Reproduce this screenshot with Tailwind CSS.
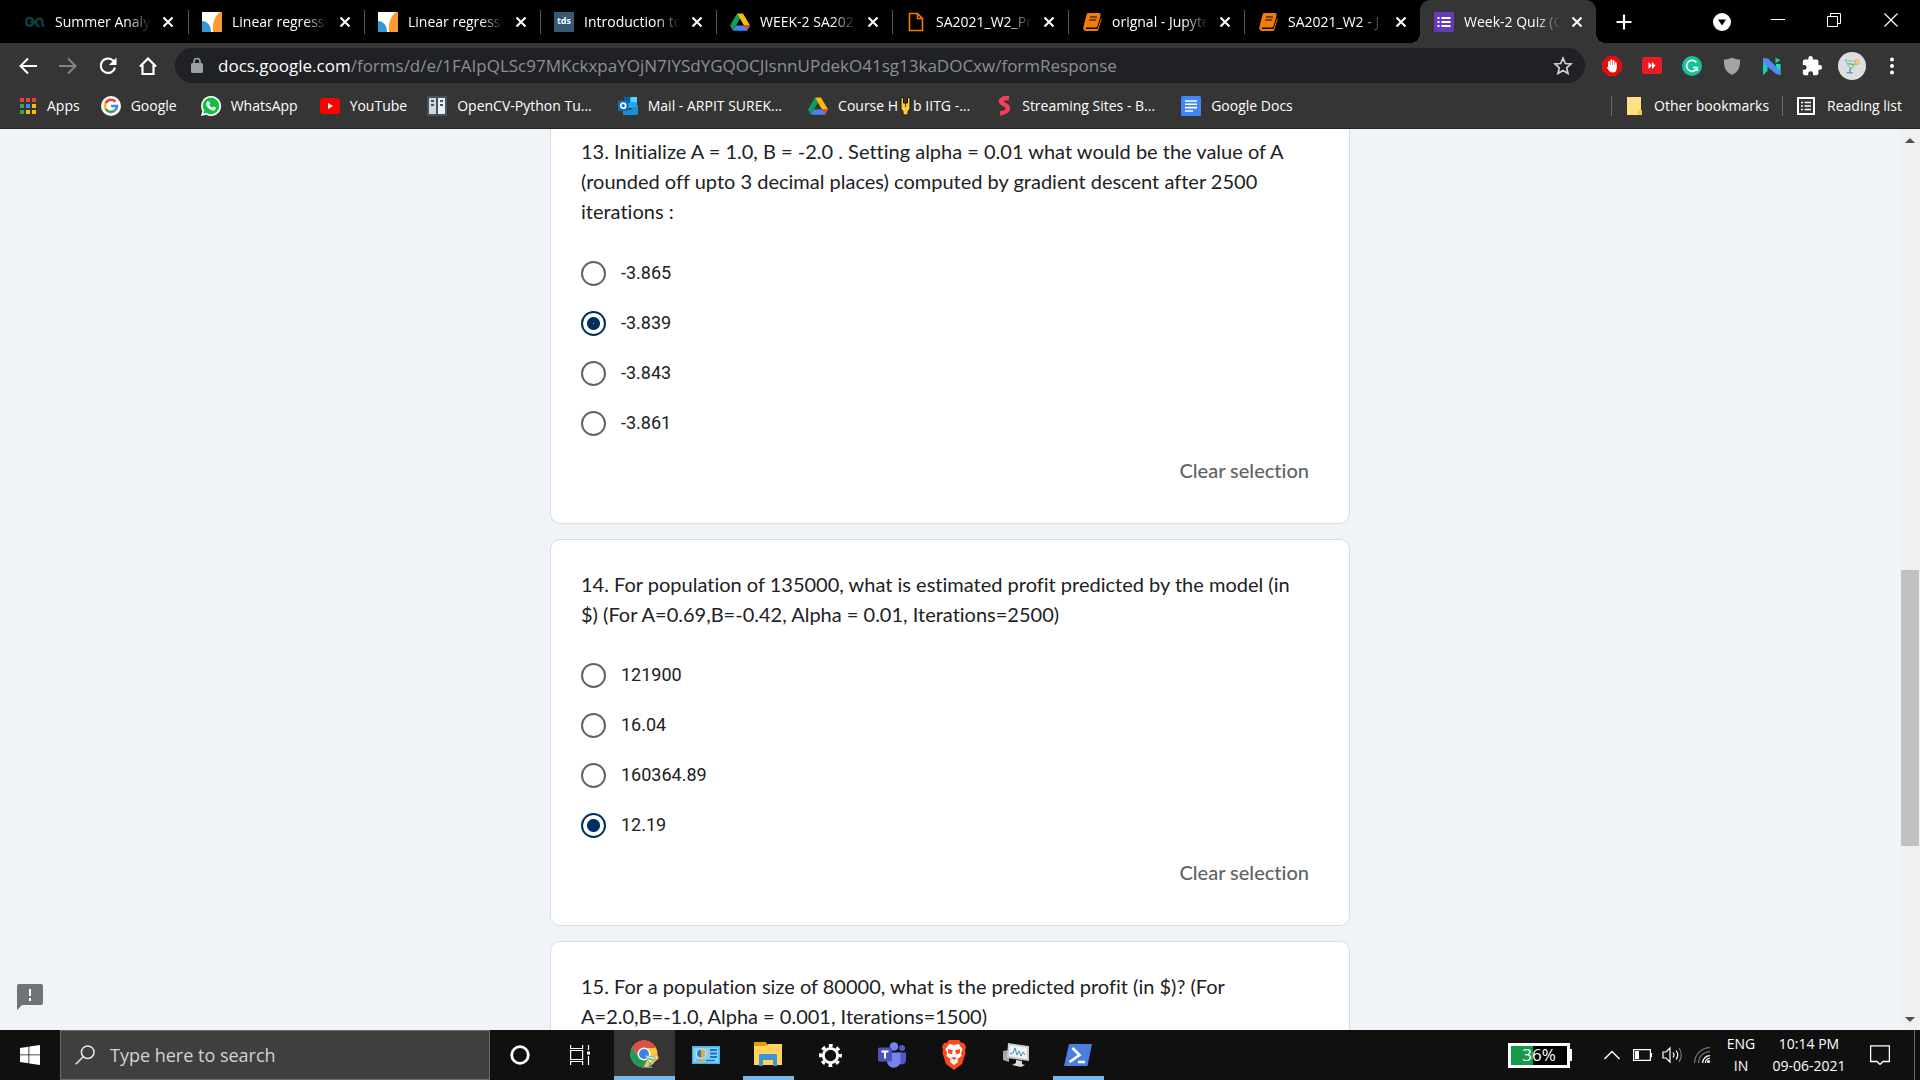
<!DOCTYPE html>
<html lang="en">
<head>
<meta charset="utf-8">
<meta name="viewport" content="width=device-width, initial-scale=1">
<title>Week-2 Quiz</title>
<script src="https://cdn.jsdelivr.net/npm/@tailwindcss/browser@4"></script>
</head>
<body class="flex h-screen flex-col overflow-hidden bg-[#f0f4f8] font-['Open_Sans',sans-serif] text-sm text-white">

<svg class="hidden" aria-hidden="true">
  <symbol id="x" viewBox="0 0 12 12"><path d="M1.5 1.5l9 9M10.5 1.5l-9 9" stroke="#fff" stroke-width="2.1" fill="none"/></symbol>
  <symbol id="matlab" viewBox="0 0 20 20"><path fill="#fff" d="M0 0h20v20H0z"/><path fill="#f93" d="M20 0v20h-9C10 11 13 3 18 0z"/><path fill="#39c" d="M0 9c5 0 9 4 9 11H0z"/></symbol>
  <symbol id="drive" viewBox="0 0 20 18"><path fill="#0f9d58" d="M7 0.500L0 12.500l3 5.200L10 5.600z"/><path fill="#fbbc04" d="M7 0.500h6l7 12h-6z"/><path fill="#4285f4" d="M6 12.500h14l-3 5.200H3z"/><path fill="#ea4335" d="M14 12.500h6l-3 5.200z"/></symbol>
  <symbol id="book" viewBox="0 0 20 20"><path fill="#f57c00" d="M6 1h11c1 0 2 1 1.700 2L15.500 14c-.3 1-1 1.500-2 1.500H4.500c-1 0-1 1.500 0 1.500H14c1 0 1.700-.4 2-1.300L19 6c.6 1 .5 1.500.3 2L16.500 17.500c-.4 1-1.200 1.500-2.200 1.500H4c-2 0-3.300-2-2.600-4L4.500 3C4.800 1.700 5.200 1 6 1z"/><path stroke="#000" stroke-width="1.200" d="M8 5h7M7.200 8h7"/></symbol>
  <symbol id="glass" viewBox="0 0 24 24"><circle cx="18" cy="7" r="4" fill="#f9b24a"/><circle cx="18" cy="7" r="2" fill="#fde3b0"/><path fill="#dff0f7" stroke="#5d9fc4" stroke-width="1" d="M3 4l15 3-6 8-4-2z"/><path fill="#8bc34a" d="M5 7l11 2-2 3-7-2z"/><path d="M10 14l-1 7M5 21h8" stroke="#5d9fc4" stroke-width="2" fill="none"/></symbol>
</svg>

<header class="shrink-0">
  <!-- Tab strip -->
  <div class="flex h-[43px] items-center bg-black pl-3">
    <div class="flex h-full w-44 shrink-0 items-center pl-[13px]">
      <svg class="size-5 shrink-0" viewBox="0 0 20 20"><path d="M8 10H5.500M8 10c0 5-7 5-7 0s5-5 7-2l6 7M11 12c-1-5 4-7 6-4l1 7" stroke="#0c3f43" stroke-width="2.500" fill="none"/></svg>
      <span class="ml-[10px] mr-[11px] w-24 overflow-hidden whitespace-nowrap [mask-image:linear-gradient(to_right,#000_75%,transparent)]">Summer Analytics</span>
      <button aria-label="Close tab"><svg class="size-3"><use href="#x"/></svg></button>
    </div>
    <div class="flex h-6 w-44 shrink-0 items-center border-l border-[#555] pl-[13px]">
      <svg class="size-5 shrink-0"><use href="#matlab"/></svg>
      <span class="ml-[10px] mr-[11px] w-24 overflow-hidden whitespace-nowrap [mask-image:linear-gradient(to_right,#000_75%,transparent)]">Linear regression</span>
      <button aria-label="Close tab"><svg class="size-3"><use href="#x"/></svg></button>
    </div>
    <div class="flex h-6 w-44 shrink-0 items-center border-l border-[#555] pl-[13px]">
      <svg class="size-5 shrink-0"><use href="#matlab"/></svg>
      <span class="ml-[10px] mr-[11px] w-24 overflow-hidden whitespace-nowrap [mask-image:linear-gradient(to_right,#000_75%,transparent)]">Linear regression</span>
      <button aria-label="Close tab"><svg class="size-3"><use href="#x"/></svg></button>
    </div>
    <div class="flex h-6 w-44 shrink-0 items-center border-l border-[#555] pl-[13px]">
      <span class="flex size-5 shrink-0 items-center justify-center bg-[#355876] text-[9px] font-bold">tds</span>
      <span class="ml-[10px] mr-[11px] w-24 overflow-hidden whitespace-nowrap [mask-image:linear-gradient(to_right,#000_75%,transparent)]">Introduction to</span>
      <button aria-label="Close tab"><svg class="size-3"><use href="#x"/></svg></button>
    </div>
    <div class="flex h-6 w-44 shrink-0 items-center border-l border-[#555] pl-[13px]">
      <svg class="size-5 shrink-0"><use href="#drive"/></svg>
      <span class="ml-[10px] mr-[11px] w-24 overflow-hidden whitespace-nowrap [mask-image:linear-gradient(to_right,#000_75%,transparent)]">WEEK-2 SA2021</span>
      <button aria-label="Close tab"><svg class="size-3"><use href="#x"/></svg></button>
    </div>
    <div class="flex h-6 w-44 shrink-0 items-center border-l border-[#555] pl-[13px]">
      <svg class="size-5 shrink-0" viewBox="0 0 20 20" fill="none" stroke="#f57c00" stroke-width="1.600"><path d="M3.500 1.500h8l5 5v12h-13zM11.500 1.500v5h5"/></svg>
      <span class="ml-[10px] mr-[11px] w-24 overflow-hidden whitespace-nowrap [mask-image:linear-gradient(to_right,#000_75%,transparent)]">SA2021_W2_Pr</span>
      <button aria-label="Close tab"><svg class="size-3"><use href="#x"/></svg></button>
    </div>
    <div class="flex h-6 w-44 shrink-0 items-center border-l border-[#555] pl-[13px]">
      <svg class="size-5 shrink-0"><use href="#book"/></svg>
      <span class="ml-[10px] mr-[11px] w-24 overflow-hidden whitespace-nowrap [mask-image:linear-gradient(to_right,#000_75%,transparent)]">orignal - Jupyter</span>
      <button aria-label="Close tab"><svg class="size-3"><use href="#x"/></svg></button>
    </div>
    <div class="flex h-6 w-44 shrink-0 items-center border-l border-[#555] pl-[13px]">
      <svg class="size-5 shrink-0"><use href="#book"/></svg>
      <span class="ml-[10px] mr-[11px] w-24 overflow-hidden whitespace-nowrap [mask-image:linear-gradient(to_right,#000_75%,transparent)]">SA2021_W2 - J</span>
      <button aria-label="Close tab"><svg class="size-3"><use href="#x"/></svg></button>
    </div>
    <div class="relative flex h-full w-44 shrink-0 items-center rounded-t-[10px] bg-[#353535] pl-[14px]">
      <span class="absolute bottom-0 -left-[10px] size-[10px] bg-[radial-gradient(circle_at_0_0,#000_10px,#353535_10px)]"></span>
      <span class="absolute bottom-0 -right-[10px] size-[10px] bg-[radial-gradient(circle_at_100%_0,#000_10px,#353535_10px)]"></span>
      <svg class="size-5 shrink-0" viewBox="0 0 20 20"><rect width="20" height="20" rx="1" fill="#673ab7"/><path stroke="#fff" stroke-width="2" d="M3.500 6h2M7.500 6h9M3.500 10h2M7.500 10h9M3.500 14h2M7.500 14h9"/></svg>
      <span class="ml-[10px] mr-[11px] w-24 overflow-hidden whitespace-nowrap [mask-image:linear-gradient(to_right,#000_75%,transparent)]">Week-2 Quiz (G</span>
      <button aria-label="Close tab"><svg class="size-3"><use href="#x"/></svg></button>
    </div>
    <button class="ml-5" aria-label="New tab"><svg class="size-4" viewBox="0 0 16 16"><path d="M8 0.500v15M0.500 8h15" stroke="#fff" stroke-width="2.200"/></svg></button>
    <div class="ml-auto flex items-center pr-[22px]">
      <button class="mr-10" aria-label="Search tabs"><svg class="size-[18px]" viewBox="0 0 18 18"><circle cx="9" cy="9" r="9" fill="#fff"/><path d="M5 6.500h8L9 12.500z" fill="#000"/></svg></button>
      <button class="mr-[42px]" aria-label="Minimize"><svg class="h-3 w-[14px]" viewBox="0 0 14 12"><path d="M0 3.500h14" stroke="#fff"/></svg></button>
      <button class="mr-[43px] mb-1" aria-label="Restore"><svg class="size-[14px]" viewBox="0 0 14 14" fill="none" stroke="#fff"><path d="M.5 3.500h10v10H.5zM3.500 3.500v-3h10v10h-3"/></svg></button>
      <button class="mb-1" aria-label="Close"><svg class="size-[14px]" viewBox="0 0 14 14"><path d="M.5.5l13 13M13.500.5l-13 13" stroke="#fff" stroke-width="1.200"/></svg></button>
    </div>
  </div>

  <!-- Address bar -->
  <div class="flex h-[45px] items-center bg-[#353535] px-2">
    <button class="flex w-10 justify-center" aria-label="Back"><svg class="size-5" viewBox="0 0 20 20" fill="none" stroke="#fff" stroke-width="2"><path d="M19 10H3M10 2.500L2.500 10l7.500 7.500"/></svg></button>
    <button class="flex w-10 justify-center" aria-label="Forward"><svg class="size-5" viewBox="0 0 20 20" fill="none" stroke="#858585" stroke-width="2"><path d="M1 10h16M10 2.500l7.500 7.500-7.500 7.500"/></svg></button>
    <button class="flex w-10 justify-center" aria-label="Reload"><svg class="size-5" viewBox="0 0 20 20"><path d="M17 11.500a7.200 7.200 0 1 1-2-7l1.500 1.500" fill="none" stroke="#fff" stroke-width="2.200"/><path fill="#fff" d="M18.500 1.500v7.500H11z"/></svg></button>
    <button class="flex w-10 justify-center" aria-label="Home"><svg class="size-5" viewBox="0 0 20 20" fill="none" stroke="#fff" stroke-width="2.200"><path d="M2 10.500L10 2.500l8 8M4.500 9v9h11V9"/></svg></button>
    <div class="mx-[7px] flex h-[35px] min-w-0 flex-1 items-center rounded-full bg-[#202124] pl-4 pr-3">
      <svg class="h-[18px] w-3 shrink-0" viewBox="0 0 12 18"><rect y="6" width="12" height="10" rx="1.500" fill="#9aa0a6"/><path d="M3 7V4.500a3 3 0 0 1 6 0V7" fill="none" stroke="#9aa0a6" stroke-width="1.600"/></svg>
      <span class="ml-[15px] flex-1 overflow-hidden whitespace-nowrap text-[17px] leading-6 text-[#8d9094]"><span class="text-white">docs.google.com</span>/forms/d/e/1FAIpQLSc97MKckxpaYOjN7IYSdYGQOCJlsnnUPdekO41sg13kaDOCxw/formResponse</span>
      <button aria-label="Bookmark this page"><svg class="size-5" viewBox="0 0 20 20" fill="none" stroke="#d0d0d0" stroke-width="1.700"><path d="M10 2.200l2.300 5.300 5.700.5-4.300 3.800 1.300 5.700-5-3-5 3 1.300-5.700L2 8l5.700-.5z"/></svg></button>
    </div>
    <button class="flex w-10 justify-center" aria-label="Ad blocker"><svg class="size-5" viewBox="0 0 20 20"><path fill="#e40d0d" d="M6 0h8l6 6v8l-6 6H6l-6-6V6z"/><path d="M7 10.500V6M9.300 10V4.200M11.600 10V4.800M13.800 11V7" stroke="#fff" stroke-width="1.800" stroke-linecap="round"/><path fill="#fff" d="M6.100 9h8.600v3c0 3-1.400 4.500-4 4.500-2.700 0-3.500-1.500-6-5 1-1 1.500-.5 2 .5z"/></svg></button>
    <button class="flex w-10 justify-center" aria-label="Video speed"><svg class="h-[17px] w-5" viewBox="0 0 20 17"><rect width="20" height="17" rx="2" fill="#ec1c24"/><path fill="#fff" d="M6.500 5l3.500 3.500-3.500 3.500zM10 5l3.500 3.500L10 12z"/></svg></button>
    <button class="flex w-10 justify-center" aria-label="Grammarly"><svg class="size-5" viewBox="0 0 20 20"><circle cx="10" cy="10" r="10" fill="#15c39a"/><path d="M14.500 6.500a5.500 5.500 0 1 0 .8 5H11M15.300 11v4" fill="none" stroke="#fff" stroke-width="1.700"/></svg></button>
    <button class="flex w-10 justify-center" aria-label="Shield"><svg class="size-[18px]" viewBox="0 0 18 18"><path fill="#a3a3a3" d="M9 0.500c2.500 1.500 5 2 8 2 .5 8-2 12.500-8 15.500C3 15 .5 10.500 1 2.500c3 0 5.500-.5 8-2z"/></svg></button>
    <button class="flex w-10 justify-center" aria-label="Reader"><svg class="size-5" viewBox="0 0 20 20"><path fill="#2bd9a8" d="M14 8h4.500v11L14 15zM1 8h4v7l-4 4z"/><path fill="#20c9c0" d="M1 7h4.500v8L1 19z"/><path fill="#4a8df5" d="M1 2l5 .5L18.500 15v4L14 18 1 7z"/><path fill="#25d67e" d="M13.500 1.500l5 2.700-5 3z"/></svg></button>
    <button class="flex w-10 justify-center" aria-label="Extensions"><svg class="size-[22px]" viewBox="0 0 24 24"><path fill="#fff" d="M20.500 11H19V7a2 2 0 0 0-2-2h-4V3.500a2.500 2.500 0 0 0-5 0V5H4a2 2 0 0 0-2 2v3.800h1.500a2.700 2.700 0 0 1 0 5.400H2V20a2 2 0 0 0 2 2h3.800v-1.500a2.700 2.700 0 0 1 5.400 0V22H17a2 2 0 0 0 2-2v-4h1.500a2.500 2.500 0 0 0 0-5z"/></svg></button>
    <button class="flex w-10 justify-center" aria-label="Profile"><span class="flex size-7 items-center justify-center rounded-full bg-[#dedede]"><svg class="size-[18px]"><use href="#glass"/></svg></span></button>
    <button class="flex w-10 justify-center" aria-label="Menu"><svg class="h-[18px] w-1" viewBox="0 0 4 18" fill="#fff"><circle cx="2" cy="2.500" r="2"/><circle cx="2" cy="9" r="2"/><circle cx="2" cy="15.500" r="2"/></svg></button>
  </div>

  <!-- Bookmarks -->
  <nav class="flex h-[41px] items-center whitespace-nowrap border-b border-[#232323] bg-[#353535] pb-1 pl-[19px] pr-[18px]">
    <a href="#" class="mr-[19px] flex items-center gap-[10px]"><svg class="size-[18px]" viewBox="0 0 18 18"><path fill="#ea4335" d="M1 1h4v4H1zM7 1h4v4H7zM13 1h4v4h-4z"/><path fill="#34a853" d="M1 7h4v4H1zM1 13h4v4H1z"/><path fill="#4285f4" d="M7 7h4v4H7z"/><path fill="#fbbc04" d="M13 7h4v4h-4zM7 13h4v4H7zM13 13h4v4h-4z"/></svg>Apps</a>
    <a href="#" class="ml-[2px] mr-6 flex items-center gap-[10px]"><svg class="size-5" viewBox="0 0 20 20"><circle cx="10" cy="10" r="10" fill="#fff"/><g fill="none" stroke-width="2.600"><path stroke="#ea4335" d="M14.500 5.700A6 6 0 0 0 4.700 7.200"/><path stroke="#fbbc04" d="M4.700 7.200a6 6 0 0 0 0 5.600"/><path stroke="#34a853" d="M4.700 12.800a6 6 0 0 0 9 1.800"/><path stroke="#4285f4" d="M13.700 14.600A6 6 0 0 0 16 10h-6"/></g></svg>Google</a>
    <a href="#" class="mr-[22px] flex items-center gap-[10px]"><svg class="size-5" viewBox="0 0 20 20"><path fill="#fff" d="M10 0a10 10 0 1 1-4.800 18.700L0 20l1.400-5A10 10 0 0 1 10 0z"/><path fill="#12c143" d="M10 1.600a8.300 8.300 0 1 1-4.500 15.300l-3.200.9.900-3.200A8.300 8.300 0 0 1 10 1.600z"/><path fill="#fff" d="M6.800 5.200l1.400.2.900 2.200-.9 1.200c.7 1.400 1.700 2.300 3.200 3l1.200-1.200 2.200 1c.2 1.500-.8 2.900-2.600 2.900-3.500-.4-6.500-3.400-7-6.500-.1-1.200.6-2.300 1.600-2.800z"/></svg>WhatsApp</a>
    <a href="#" class="mr-5 flex items-center gap-[10px]"><svg class="h-[16px] w-5" viewBox="0 0 20 16"><rect width="20" height="16" rx="3.500" fill="#f00"/><path fill="#fff" d="M8 5l5 3-5 3z"/></svg>YouTube</a>
    <a href="#" class="mr-[26px] flex items-center gap-[10px]"><svg class="size-5" viewBox="0 0 20 20"><path fill="#45545c" d="M0 0h20v20H0z"/><path fill="#cfd8dc" d="M2 2h7v16H2z"/><path fill="#eceff1" d="M11 2h7v16h-7z"/><path fill="#45545c" d="M4 4h3v2H4zM4 8h3v2H4zM13 4h3v2h-3zM13 8h3v2h-3z"/></svg>OpenCV-Python Tu...</a>
    <a href="#" class="mr-[26px] flex items-center gap-[10px]"><svg class="size-5" viewBox="0 0 20 20"><path fill="#28a8ea" d="M6 1h13v11H6z"/><path fill="#0a5ea8" d="M6 1h6v6H6z"/><path fill="#50d9ff" d="M13 1h6v5h-6z"/><path fill="#1490df" d="M5 19h13l2-1V9l-8 5-7-4z"/><rect y="4.500" width="10.500" height="10.500" rx="1" fill="#0f6cbd"/><circle cx="5.200" cy="9.700" r="2.500" fill="none" stroke="#fff" stroke-width="1.700"/></svg>Mail - ARPIT SUREK...</a>
    <a href="#" class="mr-[26px] flex items-center gap-[10px]"><svg class="size-5"><use href="#drive"/></svg><span class="flex items-center">Course H<svg class="mx-[2px] h-5 w-[11px]" viewBox="0 0 11 20"><path fill="#ffc83d" stroke="#111" d="M1 1.500h2.500V7h4V1.500H10V13l-2 2.500V19H3v-3.500L1 13z"/><path stroke="#111" stroke-width=".7" d="M5.500 7v4"/></svg>b IITG -...</span></a>
    <a href="#" class="mr-[26px] flex items-center gap-[10px]"><svg class="h-5 w-4" viewBox="0 0 16 20"><path d="M13 2C9 1.500 5 3 5 5.500s7 3.500 7 6.500-4 5-8 5.500" stroke="#f2405d" stroke-width="4.500" fill="none"/></svg>Streaming Sites - B...</a>
    <a href="#" class="flex items-center gap-[10px]"><svg class="size-5" viewBox="0 0 20 20"><rect width="20" height="20" rx="1.500" fill="#4285f4"/><path stroke="#fff" stroke-width="1.600" d="M4 5h12M4 8.300h12M4 11.600h12M4 15h8"/></svg>Google Docs</a>
    <a href="#" class="ml-auto flex h-5 items-center gap-3 border-l border-[#6b6b6b] pl-[15px]"><svg class="h-[18px] w-[15px]" viewBox="0 0 15 18"><path fill="#ffe083" d="M0 0h14v13h1v5H0z"/><path fill="#f3c64e" d="M11 18v-4l1-1h3v5z"/></svg>Other bookmarks</a>
    <a href="#" class="ml-[13px] flex h-5 items-center gap-3 border-l border-[#6b6b6b] pl-[14px]"><svg class="size-[18px]" viewBox="0 0 18 18" fill="none" stroke="#fff"><rect x="1" y="1" width="16" height="16" stroke-width="2"/><path stroke-width="1.600" d="M4 5.500h2M7.500 5.500H14M4 9h2M7.500 9H14M4 12.500h2M7.500 12.500H14"/></svg>Reading list</a>
  </nav>
</header>

<!-- Form page -->
<div class="relative flex min-h-0 flex-1">
  <main class="flex min-w-0 flex-1 flex-col items-center gap-[15px] overflow-hidden text-[#202124]">
    <form class="w-full max-w-[800px] shrink-0 rounded-b-[10px] border border-t-0 border-[#dadce0] bg-white px-[30px] pb-8 pt-[7px]">
      <h2 class="mb-[22px] font-['Lato',sans-serif] text-xl leading-[30px] [font-variant-ligatures:none]">13. Initialize A = 1.0, B = -2.0 . Setting alpha = 0.01 what would be the value of A<br>(rounded off upto 3 decimal places) computed by gradient descent after 2500<br>iterations :</h2>
      <div class="font-['Roboto',sans-serif] text-lg">
        <label class="flex h-[50px] items-center gap-[15px]"><input type="radio" name="q13" class="size-[25px] appearance-none rounded-full border-2 border-[#5f6368] checked:border-[#002f62] checked:bg-[radial-gradient(circle,#002f62_6px,transparent_7px)]">-3.865</label>
        <label class="flex h-[50px] items-center gap-[15px]"><input type="radio" name="q13" checked class="size-[25px] appearance-none rounded-full border-2 border-[#5f6368] checked:border-[#002f62] checked:bg-[radial-gradient(circle,#8fa6be_0px,#002f62_1px,#002f62_6px,transparent_7px)]">-3.839</label>
        <label class="flex h-[50px] items-center gap-[15px]"><input type="radio" name="q13" class="size-[25px] appearance-none rounded-full border-2 border-[#5f6368] checked:border-[#002f62] checked:bg-[radial-gradient(circle,#002f62_6px,transparent_7px)]">-3.843</label>
        <label class="flex h-[50px] items-center gap-[15px]"><input type="radio" name="q13" class="size-[25px] appearance-none rounded-full border-2 border-[#5f6368] checked:border-[#002f62] checked:bg-[radial-gradient(circle,#002f62_6px,transparent_7px)]">-3.861</label>
      </div>
      <div class="flex h-[43px] items-center justify-end pr-[10px]"><button type="reset" class="font-['Lato',sans-serif] text-xl font-medium text-[#5f6368] [font-variant-ligatures:none]">Clear selection</button></div>
    </form>

    <form class="w-full max-w-[800px] shrink-0 rounded-[10px] border border-[#dadce0] bg-white px-[30px] pb-8 pt-[29px]">
      <h2 class="mb-[21px] font-['Lato',sans-serif] text-xl leading-[30px] [font-variant-ligatures:none]">14. For population of 135000, what is estimated profit predicted by the model (in<br>$) (For A=0.69,B=-0.42, Alpha = 0.01, Iterations=2500)</h2>
      <div class="font-['Roboto',sans-serif] text-lg">
        <label class="flex h-[50px] items-center gap-[15px]"><input type="radio" name="q14" class="size-[25px] appearance-none rounded-full border-2 border-[#5f6368] checked:border-[#002f62] checked:bg-[radial-gradient(circle,#002f62_6px,transparent_7px)]">121900</label>
        <label class="flex h-[50px] items-center gap-[15px]"><input type="radio" name="q14" class="size-[25px] appearance-none rounded-full border-2 border-[#5f6368] checked:border-[#002f62] checked:bg-[radial-gradient(circle,#002f62_6px,transparent_7px)]">16.04</label>
        <label class="flex h-[50px] items-center gap-[15px]"><input type="radio" name="q14" class="size-[25px] appearance-none rounded-full border-2 border-[#5f6368] checked:border-[#002f62] checked:bg-[radial-gradient(circle,#002f62_6px,transparent_7px)]">160364.89</label>
        <label class="flex h-[50px] items-center gap-[15px]"><input type="radio" name="q14" checked class="size-[25px] appearance-none rounded-full border-2 border-[#5f6368] checked:border-[#002f62] checked:bg-[radial-gradient(circle,#002f62_6px,transparent_7px)]">12.19</label>
      </div>
      <div class="flex h-[43px] items-center justify-end pr-[10px]"><button type="reset" class="font-['Lato',sans-serif] text-xl font-medium text-[#5f6368] [font-variant-ligatures:none]">Clear selection</button></div>
    </form>

    <form class="w-full max-w-[800px] shrink-0 rounded-[10px] border border-[#dadce0] bg-white px-[30px] pb-8 pt-[29px]">
      <h2 class="font-['Lato',sans-serif] text-xl leading-[30px] [font-variant-ligatures:none]">15. For a population size of 80000, what is the predicted profit (in $)? (For<br>A=2.0,B=-1.0, Alpha = 0.001, Iterations=1500)</h2>
    </form>
  </main>

  <!-- Scroll bar -->
  <div class="flex w-5 shrink-0 flex-col items-center bg-[#f1f1f1]">
    <svg class="size-5 shrink-0" viewBox="0 0 20 20"><path fill="#505050" d="M5 14h10l-5-5z"/></svg>
    <div class="grow-[421]"></div>
    <div class="w-[18px] grow-[276] bg-[#c1c1c1]"></div>
    <div class="grow-[164]"></div>
    <svg class="size-5 shrink-0" viewBox="0 0 20 20"><path fill="#505050" d="M5 7h10l-5 5z"/></svg>
  </div>

  <button class="absolute bottom-5 left-[17px]" aria-label="Report a problem"><svg class="size-[26px]" viewBox="0 0 26 26"><path fill="#707274" d="M2 0h22a2 2 0 0 1 2 2v17a2 2 0 0 1-2 2H5l-5 5V2a2 2 0 0 1 2-2z"/><path fill="#fff" d="M12 5h2v7h-2zM12 14h2v3h-2z"/></svg></button>
</div>

<!-- Taskbar -->
<footer class="flex h-[50px] shrink-0 items-center bg-[#101010]">
  <button class="flex w-[60px] justify-center" aria-label="Start"><svg class="size-5" viewBox="0 0 20 20" fill="#fff"><path d="M0 3l8.500-1.300v7.800H0zM9.300 1.500L20 0v9.500H9.300zM0 10.300h8.500v7.900L0 17zM9.300 10.300H20V20L9.300 18.400z"/></svg></button>
  <label class="flex h-full w-[430px] items-center border border-[#6b6b6b] bg-[#3f3f3f] pl-[14px]">
    <svg class="size-5 shrink-0" viewBox="0 0 20 20" fill="none" stroke="#e8e8e8" stroke-width="1.500"><circle cx="12.700" cy="7.200" r="6.300"/><path d="M8.200 11.800L.7 19.300"/></svg>
    <input type="text" aria-label="Search" placeholder="Type here to search" class="ml-[15px] w-full bg-transparent text-lg text-white placeholder:text-[#d2d2d2]">
  </label>
  <button class="flex w-[60px] justify-center" aria-label="Cortana"><svg class="size-5" viewBox="0 0 20 20"><circle cx="10" cy="10" r="8.300" fill="none" stroke="#fff" stroke-width="2.800"/></svg></button>
  <button class="flex w-16 justify-center pr-1" aria-label="Task view"><svg class="size-5" viewBox="0 0 20 20" fill="none" stroke="#fff" stroke-width="1.200"><path d="M.6 0v3.500h12V0M.6 5.500h12v9H.6zM.6 20v-3.500h12V20M18.500 0v5M18.500 11v9"/><path fill="#fff" stroke="none" d="M17 6.500h3v3h-3z"/></svg></button>
  <button class="flex h-full w-[61px] items-center justify-center border-b-4 border-[#76b9ed] bg-[#353535] pt-1" aria-label="Chrome"><svg class="size-[30px]" viewBox="0 0 30 30"><circle cx="14" cy="14" r="13.500" fill="#fbc73b"/><path fill="#df4f43" d="M2.300 7.200A13.500 13.500 0 0 1 25.700 7.200L14 8z"/><path fill="#df4f43" d="M2.300 7.200L8.500 17l6-9h11.200L22 4 14 0z"/><path fill="#1d9b58" d="M2.300 7.200L8.500 17l9 2-4 8.500A13.500 13.500 0 0 1 2.300 7.200z"/><circle cx="14" cy="14" r="6.500" fill="#fff"/><circle cx="14" cy="14" r="5" fill="#3f7fe8"/><svg x="13" y="12" width="17" height="18"><use href="#glass"/></svg></svg></button>
  <button class="flex h-full w-[62px] items-center justify-center" aria-label="Control panel"><svg class="h-[18px] w-7" viewBox="0 0 28 18"><path fill="#49b3e8" d="M0 0h28v18H0z"/><path fill="#85d1f7" d="M1.500 1.500h25v15h-25z"/><circle cx="9" cy="7.500" r="5" fill="#d9effa"/><circle cx="9" cy="7.500" r="4" fill="#1d7fc4"/><path fill="#f8a723" d="M9 7.500v-4a4 4 0 0 1 0 8z"/><path stroke="#1976b9" stroke-width="2" d="M18 4h7M18 7.500h7M18 11h7"/><path stroke="#f08c1c" stroke-width="1.500" d="M4 14.500h9"/><path stroke="#1976b9" stroke-width="1.500" d="M14 14.500h9"/></svg></button>
  <button class="flex h-full w-[62px] items-center justify-center" aria-label="File Explorer"><span class="flex h-full w-[51px] items-center justify-center border-b-4 border-[#76b9ed] pt-[2px]"><svg class="h-6 w-7" viewBox="0 0 28 24"><path fill="#e2a100" d="M0 1q0-1 1-1h11l2 4H0z"/><path fill="#ffd35c" d="M0 4l12 0 2-2h14v21H0z"/><path fill="#3f92d4" d="M5 24V13q0-1 1-1h16q1 0 1 1v11h-4v-6h-10v6z"/></svg></span></button>
  <button class="flex h-full w-[62px] items-center justify-center" aria-label="Settings"><svg class="size-[23px]" viewBox="0 0 24 24"><circle cx="12" cy="12" r="7.500" fill="none" stroke="#fff" stroke-width="3"/><circle cx="12" cy="12" r="10.300" fill="none" stroke="#fff" stroke-width="3.200" stroke-dasharray="4 4.090" stroke-dashoffset="2"/></svg></button>
  <button class="flex h-full w-[62px] items-center justify-center" aria-label="Teams"><svg class="h-[26px] w-7" viewBox="0 0 28 26"><circle cx="24" cy="6" r="3" fill="#5059c9"/><path fill="#5059c9" d="M19 10.500h9V18a4.500 4.500 0 0 1-9 0z"/><circle cx="16" cy="4.500" r="4.300" fill="#7b83eb"/><path fill="#7b83eb" d="M9 10.500h13.500V19a6.700 6.700 0 0 1-13.500 0z"/><rect y="5.500" width="14" height="14" rx="1.500" fill="#4b53bc"/><path stroke="#fff" stroke-width="2" d="M3.500 9.500h7M7 9.500V16.500"/></svg></button>
  <button class="flex h-full w-[62px] items-center justify-center" aria-label="Brave"><svg class="h-[30px] w-6" viewBox="0 0 24 30"><path fill="#fb4b1d" d="M7 0h10l2.500 3L22 3l2 4-1 3 .5 3-3.500 11-8 6-8-6L.5 13 1 10 0 7l2-4 2.500 0z"/><path fill="#fff" d="M12 5l4.500-1 4 5-1.500 4 .5 3-4 3 .5 3-4 3-4-3 .5-3-4-3 .5-3L3.500 9l4-5z"/><path fill="#fb4b1d" d="M6 9l5 1.500-1.500 4L6 13zM18 9l-5 1.500 1.500 4L18 13zM9 18l3-1 3 1-3 2z"/></svg></button>
  <button class="flex h-full w-[62px] items-center justify-center" aria-label="System monitor"><svg class="h-[26px] w-7" viewBox="0 0 28 26"><path fill="#a8abad" d="M1 9l6-1v12l-6-2z"/><path fill="#5fd23c" d="M2 10h2v2H2z"/><path fill="#c9cccd" d="M6 1l21 3v15L5 16z"/><path fill="#eef3f6" d="M7.500 3L25 5.500V17L7 14z"/><path fill="none" stroke="#4294b8" d="M8 12l3-1 2-5 2 7 2-4 2 5 2-4 2 3"/><path fill="#d8dadb" d="M14 18l6 1v3l3 1-4 2-9-2 4-2z"/></svg></button>
  <button class="flex h-full w-[62px] items-center justify-center" aria-label="PowerShell"><span class="flex h-full w-[51px] items-center justify-center border-b-4 border-[#76b9ed] pt-1"><svg class="h-[22px] w-7" viewBox="0 0 28 22"><path fill="#4a7fe0" d="M5 0h23l-4.500 22H0z"/><path d="M8.500 4l7 7-10 7M14 18h7" fill="none" stroke="#fff" stroke-width="2.600"/></svg></span></button>

  <div class="ml-auto flex h-full items-center">
    <div class="flex items-center">
      <div class="flex h-[25px] w-[62px] items-center justify-center border-[3px] border-white bg-[linear-gradient(to_right,#16994a_40%,#000_40%)] text-[17px]">36%</div>
      <div class="h-3 w-[2px] bg-white"></div>
    </div>
    <button class="ml-8" aria-label="Show hidden icons"><svg class="h-4 w-4" viewBox="0 0 16 16"><path d="M.5 12L8 4.500l7.500 7.500" fill="none" stroke="#fff" stroke-width="1.400"/></svg></button>
    <svg class="ml-[13px] h-3 w-[19px]" viewBox="0 0 19 12"><path fill="none" stroke="#fff" stroke-width="1.200" d="M.6.6h16.800v10.800H.6z"/><path fill="#fff" d="M2 2h4v8H2zM18 4h1v4h-1z"/></svg>
    <svg class="ml-[10px] h-[18px] w-5" viewBox="0 0 20 18" fill="none" stroke="#fff" stroke-width="1.200"><path d="M1 6h3l4-4v14l-4-4H1z"/><path d="M11 6.500q2 2.500 0 5M14 4.500q3.500 4.500 0 9"/><path stroke="#777" d="M17 2q4.500 7 0 14"/></svg>
    <svg class="ml-3 size-4" viewBox="0 0 16 16" fill="none" stroke-width="1.200"><path stroke="#777" d="M.6 16A15.400 15.400 0 0 1 16 .6M4.600 16A11.400 11.400 0 0 1 16 4.600"/><path stroke="#fff" d="M8.600 16A7.400 7.400 0 0 1 16 8.600M11.500 16a4 4 0 0 1 4.500-4.500"/><circle cx="14.500" cy="14.500" r="1.500" fill="#fff"/></svg>
    <div class="ml-[15px] w-8 text-center leading-[22px]">ENG<br>IN</div>
    <div class="ml-3 w-20 text-center leading-[22px]">10:14 PM<br>09-06-2021</div>
    <button class="ml-[21px]" aria-label="Notifications"><svg class="size-5" viewBox="0 0 20 20"><path fill="none" stroke="#fff" stroke-width="1.300" d="M.6.8h18.800v15.700H13l-3 3-3-3H.6z"/></svg></button>
    <button class="ml-6 h-full w-[6px] border-l border-[#6b6b6b]" aria-label="Show desktop"></button>
  </div>
</footer>
</body>
</html>
